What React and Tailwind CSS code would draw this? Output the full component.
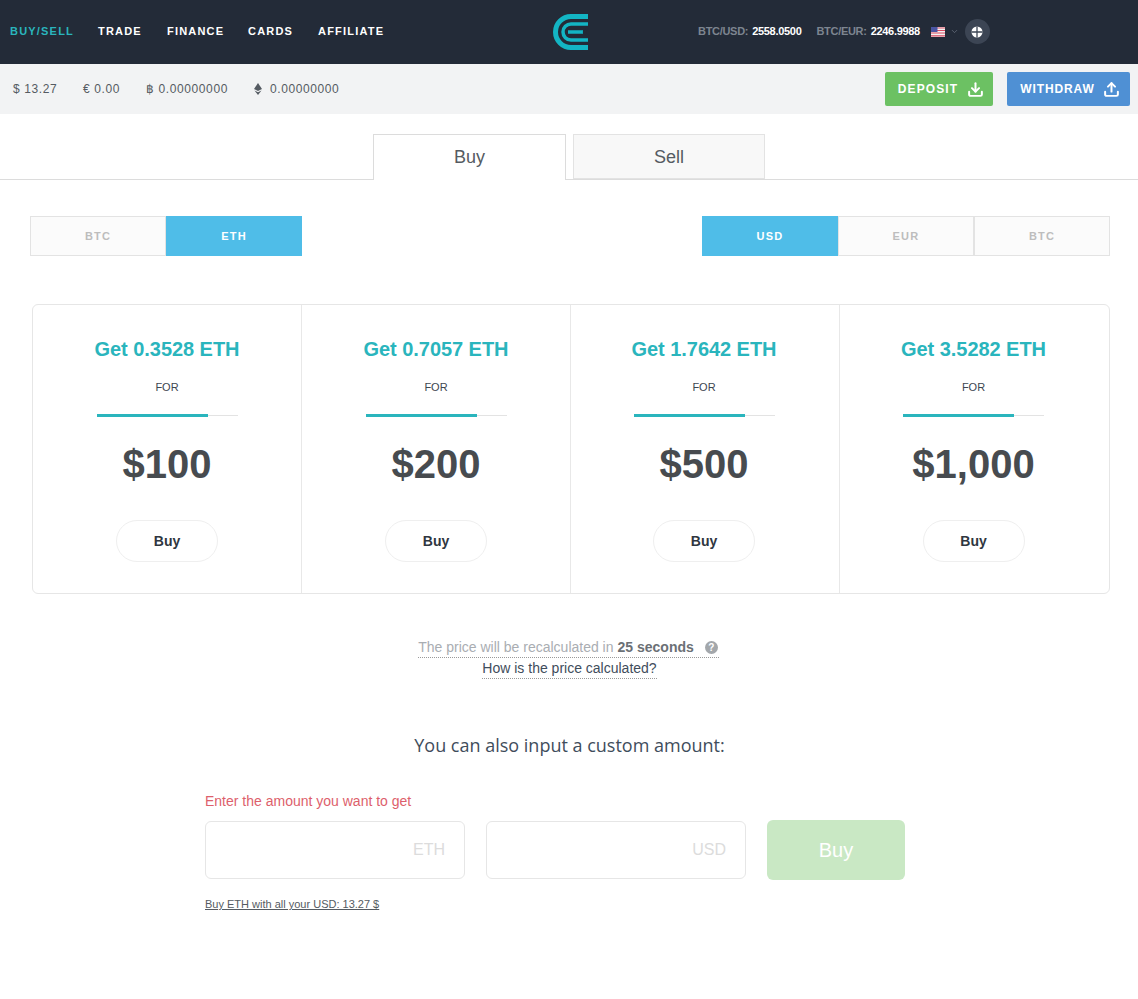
import { ChevronDown, Download, Upload } from 'lucide-react';

const offers = [
    { get: '0.3528', price: '$100', col: 'border-r' },
    { get: '0.7057', price: '$200', col: 'border-r' },
    { get: '1.7642', price: '$500', col: 'border-r pr-[2px]' },
    { get: '3.5282', price: '$1,000', col: 'pr-[2px]' },
];

function Logo() {
    return (
        <svg width="36" height="36" viewBox="0 0 36 36" fill="none">
            <path d="M35 2.5 H18 A15.5 15.5 0 0 0 18 33.5 H35" stroke="#13b5c4" strokeWidth="5" />
            <path d="M35 10 H18 A8 8 0 0 0 18 26 H35" stroke="#13b5c4" strokeWidth="3.5" />
            <path d="M15 18 H30" stroke="#13b5c4" strokeWidth="3.5" />
            <path d="M36.5 13 L31 18 L36.5 23" stroke="#232b38" strokeWidth="2" />
        </svg>
    );
}

function Flag() {
    return (
        <svg width="14" height="10" viewBox="0 0 14 10">
            <rect width="14" height="10" fill="#f3f3f3" />
            <path d="M0 1 H14 M0 3.5 H14 M0 6 H14 M0 8.8 H14" stroke="#d9485f" strokeWidth="1.2" />
            <rect width="6.5" height="5" fill="#4a55a2" />
        </svg>
    );
}

function Globe() {
    return (
        <svg width="12" height="12" viewBox="0 0 12 12">
            <circle cx="6" cy="6" r="5.5" fill="#fff" />
            <path d="M0.5 6 H11.5 M6 0.5 V11.5" stroke="#3c4554" strokeWidth="1.3" />
        </svg>
    );
}

function EthIcon() {
    return (
        <svg width="8" height="12" viewBox="0 0 8 12" fill="#555b62">
            <path d="M4 0 L8 6 L4 8 L0 6 Z" />
            <path d="M0.5 7.5 L4 9.3 L7.5 7.5 L4 12 Z" />
        </svg>
    );
}

function Segment({ label, active }) {
    return (
        <div className={active
            ? 'w-[136px] h-10 flex items-center justify-center bg-[#4fbde8] text-white text-[11px] font-bold tracking-[1.2px]'
            : 'w-[136px] h-10 flex items-center justify-center bg-[#fbfbfb] border border-[#e3e3e3] text-[#bdbdbd] text-[11px] font-bold tracking-[1.2px]'}>
            {label}
        </div>
    );
}

function Offer({ get, price, col }) {
    return (
        <div className={`w-[269px] flex flex-col items-center pt-[29px] border-[#e8e8e8] ${col}`}>
            <div className="text-[20px] leading-[30px] font-bold tracking-[-0.05px] text-[#2ab5bd]">Get {get} ETH</div>
            <div className="mt-4 text-[11px] leading-[14px] text-[#3d4650]">FOR</div>
            <div className="mt-5 w-[141px] h-[3px] flex items-center">
                <div className="w-[111px] h-[3px] bg-[#2ab5bd]"></div>
                <div className="flex-1 h-px bg-[#e3e3e3]"></div>
            </div>
            <div className="mt-[19px] text-[40px] leading-[56px] font-bold text-[#474b4f]">{price}</div>
            <button className="mt-[28px] w-[102px] h-[42px] rounded-[21px] border border-[#efefef] bg-white text-sm font-bold text-[#2f3640]">Buy</button>
        </div>
    );
}

export default function App() {
    return (
        <div className="min-h-[999px] bg-white font-['Liberation_Sans',Arial,sans-serif]">
            {/* Navbar */}
            <nav className="h-16 bg-[#232b38] pl-[10px] pb-px flex items-center relative">
                <div className="flex items-center text-[11px] font-bold tracking-[1.2px] text-white">
                    <span className="text-[#2ab5bd] w-[88px]">BUY/SELL</span>
                    <span className="w-[69px]">TRADE</span>
                    <span className="w-[81px]">FINANCE</span>
                    <span className="w-[70px]">CARDS</span>
                    <span>AFFILIATE</span>
                </div>
                <div className="absolute left-[553px] top-[14px]"><Logo /></div>
                <div className="absolute left-[698px] top-[19px] flex items-center text-[11px] font-bold tracking-[-0.3px] h-[25px]">
                    <span className="text-[#7d8590]">BTC/USD:</span>
                    <span className="ml-1 text-white">2558.0500</span>
                    <span className="ml-[15px] text-[#7d8590]">BTC/EUR:</span>
                    <span className="ml-1 text-white">2246.9988</span>
                    <span className="ml-[11px]"><Flag /></span>
                    <ChevronDown className="ml-[5px]" size={9} color="#6a7280" />
                    <span className="ml-[6px] w-[25px] h-[25px] rounded-full bg-[#3c4554] flex items-center justify-center"><Globe /></span>
                </div>
            </nav>

            {/* Balances */}
            <div className="h-[50px] bg-[#f2f3f4] pl-[13px] pr-2 flex items-center justify-between">
                <div className="flex items-center text-xs tracking-[0.6px] text-[#555b62]">
                    <span className="w-[70px]">$ 13.27</span>
                    <span className="w-[63px]">€ 0.00</span>
                    <span className="w-[108px]">฿ 0.00000000</span>
                    <span className="flex items-center gap-2"><EthIcon /> 0.00000000</span>
                </div>
                <div className="flex items-center gap-[14px]">
                    <button className="w-[108px] h-[34px] pl-1 rounded-[2px] bg-[#6cc163] text-white text-xs font-bold tracking-[1.1px] flex items-center justify-center gap-[9px]">
                        DEPOSIT <Download size={17} strokeWidth={2.8} />
                    </button>
                    <button className="w-[123px] h-[34px] pl-[3px] rounded-[2px] bg-[#4f90d4] text-white text-xs font-bold tracking-[0.9px] flex items-center justify-center gap-2">
                        WITHDRAW <Upload size={17} strokeWidth={2.8} />
                    </button>
                </div>
            </div>

            {/* Buy / Sell tabs */}
            <div className="h-[66px] pt-5 border-b border-[#dcdcdc] flex justify-center gap-[7px]">
                <div className="w-[193px] h-[46px] pb-[2px] bg-white border border-[#dcdcdc] border-b-0 flex items-center justify-center text-lg text-[#555b62]">Buy</div>
                <div className="w-[192px] h-[45px] bg-[#f8f8f8] border border-[#e3e3e3] flex items-center justify-center text-lg text-[#555b62]">Sell</div>
            </div>

            {/* Currency switches */}
            <div className="mt-[36px] pl-[30px] pr-[28px] flex justify-between">
                <div className="flex">
                    <Segment label="BTC" />
                    <Segment label="ETH" active />
                </div>
                <div className="flex">
                    <Segment label="USD" active />
                    <Segment label="EUR" />
                    <Segment label="BTC" />
                </div>
            </div>

            {/* Offers */}
            <div className="mt-12 ml-8 mr-7 h-[290px] flex border border-[#e6e6e6] rounded-md">
                {offers.map((o) => (
                    <Offer key={o.price} get={o.get} price={o.price} col={o.col} />
                ))}
            </div>

            {/* Price note */}
            <div className="mt-[44px] flex flex-col items-center text-sm">
                <div className="h-[20px] leading-[19px] -ml-px border-b border-dotted border-[#9a9a9a] text-[#a9adb2] flex items-center">
                    The price will be recalculated in
                    <b className="ml-1 text-[#6b7075]">25 seconds</b>
                    <span className="ml-[11px] mr-[1px] w-[13px] h-[13px] rounded-full bg-[#a3a7ab] text-white text-[10px] font-bold flex items-center justify-center">?</span>
                </div>
                <div className="h-[21px] leading-[20px] ml-px border-b border-dotted border-[#9a9a9a] text-[#3f4d5c]">How is the price calculated?</div>
            </div>

            <div className="mt-[53px] ml-px text-center text-[18px] leading-[26px] text-[#3f4d5c] font-['Open_Sans',sans-serif]">You can also input a custom amount:</div>

            {/* Custom amount */}
            <div className="mt-[33px] ml-[205px] w-[700px]">
                <div className="text-sm leading-[20px] text-[#dd5f6c]">Enter the amount you want to get</div>
                <div className="mt-[9px] flex items-center">
                    <div className="w-[260px] h-[58px] rounded-md border border-[#e6e6e6] flex items-center justify-end pr-[19px] text-base text-[#dcdcdc]">ETH</div>
                    <div className="ml-[21px] w-[260px] h-[58px] rounded-md border border-[#e6e6e6] flex items-center justify-end pr-[19px] text-base text-[#dcdcdc]">USD</div>
                    <button className="ml-[21px] w-[138px] h-[60px] rounded-md bg-[#c9e8c4] text-white text-xl">Buy</button>
                </div>
                <div className="mt-4 text-[11px] leading-[16px] underline text-[#555b62]">Buy ETH with all your USD: 13.27 $</div>
            </div>
        </div>
    );
}
